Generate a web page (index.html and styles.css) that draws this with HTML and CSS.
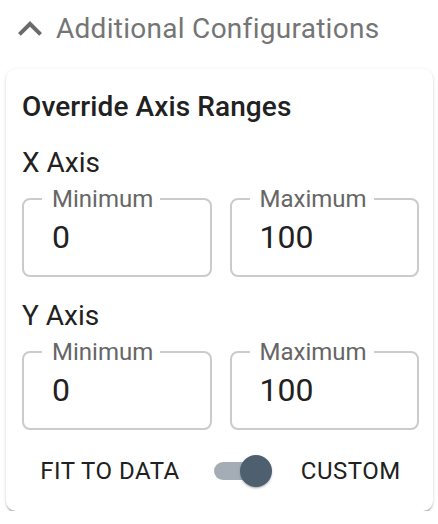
FILE: index.html
```html
<!DOCTYPE html>
<html lang="en">
<head>
    <meta charset="UTF-8">
    <meta name="viewport" content="width=device-width, initial-scale=1.0">
    <title>Additional Configurations</title>
    <link rel="stylesheet" href="styles.css">
</head>
<body>
<div class="page">
    <div class="summary">
        <svg class="chevron" viewBox="0 0 24 24" width="48" height="48">
            <path d="M12 8l-6 6 1.41 1.41L12 10.83l4.59 4.58L18 14z" fill="#6b6b6b"/>
        </svg>
        <span class="summary-title">Additional Configurations</span>
    </div>

    <div class="card">
        <div class="card-title">Override Axis Ranges</div>

        <div class="axis-label">X Axis</div>
        <div class="range-row">
            <fieldset class="field">
                <legend>Minimum</legend>
                <input class="field-input" type="text" value="0">
            </fieldset>
            <fieldset class="field">
                <legend>Maximum</legend>
                <input class="field-input" type="text" value="100">
            </fieldset>
        </div>

        <div class="axis-label axis-label-y">Y Axis</div>
        <div class="range-row">
            <fieldset class="field">
                <legend>Minimum</legend>
                <input class="field-input" type="text" value="0">
            </fieldset>
            <fieldset class="field">
                <legend>Maximum</legend>
                <input class="field-input" type="text" value="100">
            </fieldset>
        </div>

        <div class="mode-row">
            <span class="mode-label">FIT TO DATA</span>
            <span class="switch">
                <span class="switch-track"></span>
                <span class="switch-thumb"></span>
            </span>
            <span class="mode-label">CUSTOM</span>
        </div>
    </div>
</div>
</body>
</html>
```

FILE: styles.css
```css
body {
    margin: 0;
    font-family: Roboto, "Liberation Sans", Arial, sans-serif;
    background: #fff;
    color: #212121;
}
.page {
    padding: 5px 5px 0 6px;
}
.summary {
    display: flex;
    align-items: center;
    height: 48px;
}
.chevron {
    display: block;
    flex: none;
}
.summary-title {
    margin-left: 2px;
    font-size: 28px;
    line-height: 48px;
    letter-spacing: 0.28px;
    color: #757575;
}
.card {
    margin-top: 16px;
    width: 427px;
    box-sizing: border-box;
    padding: 21px 14px 20px 16px;
    background: #fff;
    border-radius: 10px;
    box-shadow: 0 3px 2px -1px rgba(0, 0, 0, 0.22), 0 1px 2px rgba(0, 0, 0, 0.12), 0 1px 5px rgba(0, 0, 0, 0.08);
}
.card-title {
    font-size: 28px;
    line-height: 34px;
    font-weight: 500;
    letter-spacing: 0.1px;
}
.axis-label {
    margin-top: 22px;
    font-size: 28px;
    line-height: 34px;
}
.axis-label-y {
    margin-top: 22px;
}
.range-row {
    display: grid;
    grid-template-columns: 1fr 1fr;
    gap: 18px;
    margin-top: 7px;
}
.field {
    margin: 0;
    min-width: 0;
    padding: 0 12px 18px 18px;
    border: 2px solid #cbcbcb;
    border-radius: 8px;
}
.field legend {
    padding: 0 7px 0 10px;
    font-size: 24px;
    line-height: 24px;
    color: #666;
}
.field-input {
    display: block;
    box-sizing: border-box;
    width: 100%;
    margin-top: 6px;
    padding: 0 0 0 10px;
    border: none;
    outline: none;
    background: transparent;
    font-family: inherit;
    font-size: 32px;
    line-height: 40px;
    height: 40px;
    color: #212121;
}
.mode-row {
    display: flex;
    justify-content: center;
    align-items: center;
    height: 40px;
    margin-top: 21px;
}
.mode-label {
    font-size: 24px;
    letter-spacing: 0.5px;
    color: #212121;
}
.switch {
    position: relative;
    width: 58px;
    height: 32px;
    margin: 0 29px 0 34px;
}
.switch-track {
    position: absolute;
    left: 0;
    top: 7px;
    width: 52px;
    height: 18px;
    border-radius: 9px;
    background: #a4adb6;
}
.switch-thumb {
    position: absolute;
    right: 0;
    top: 0;
    width: 32px;
    height: 32px;
    border-radius: 50%;
    background: #4e5f6f;
    box-shadow: 0 2px 2px -1px rgba(0, 0, 0, 0.25), 0 1px 3px rgba(0, 0, 0, 0.15);
}
```
